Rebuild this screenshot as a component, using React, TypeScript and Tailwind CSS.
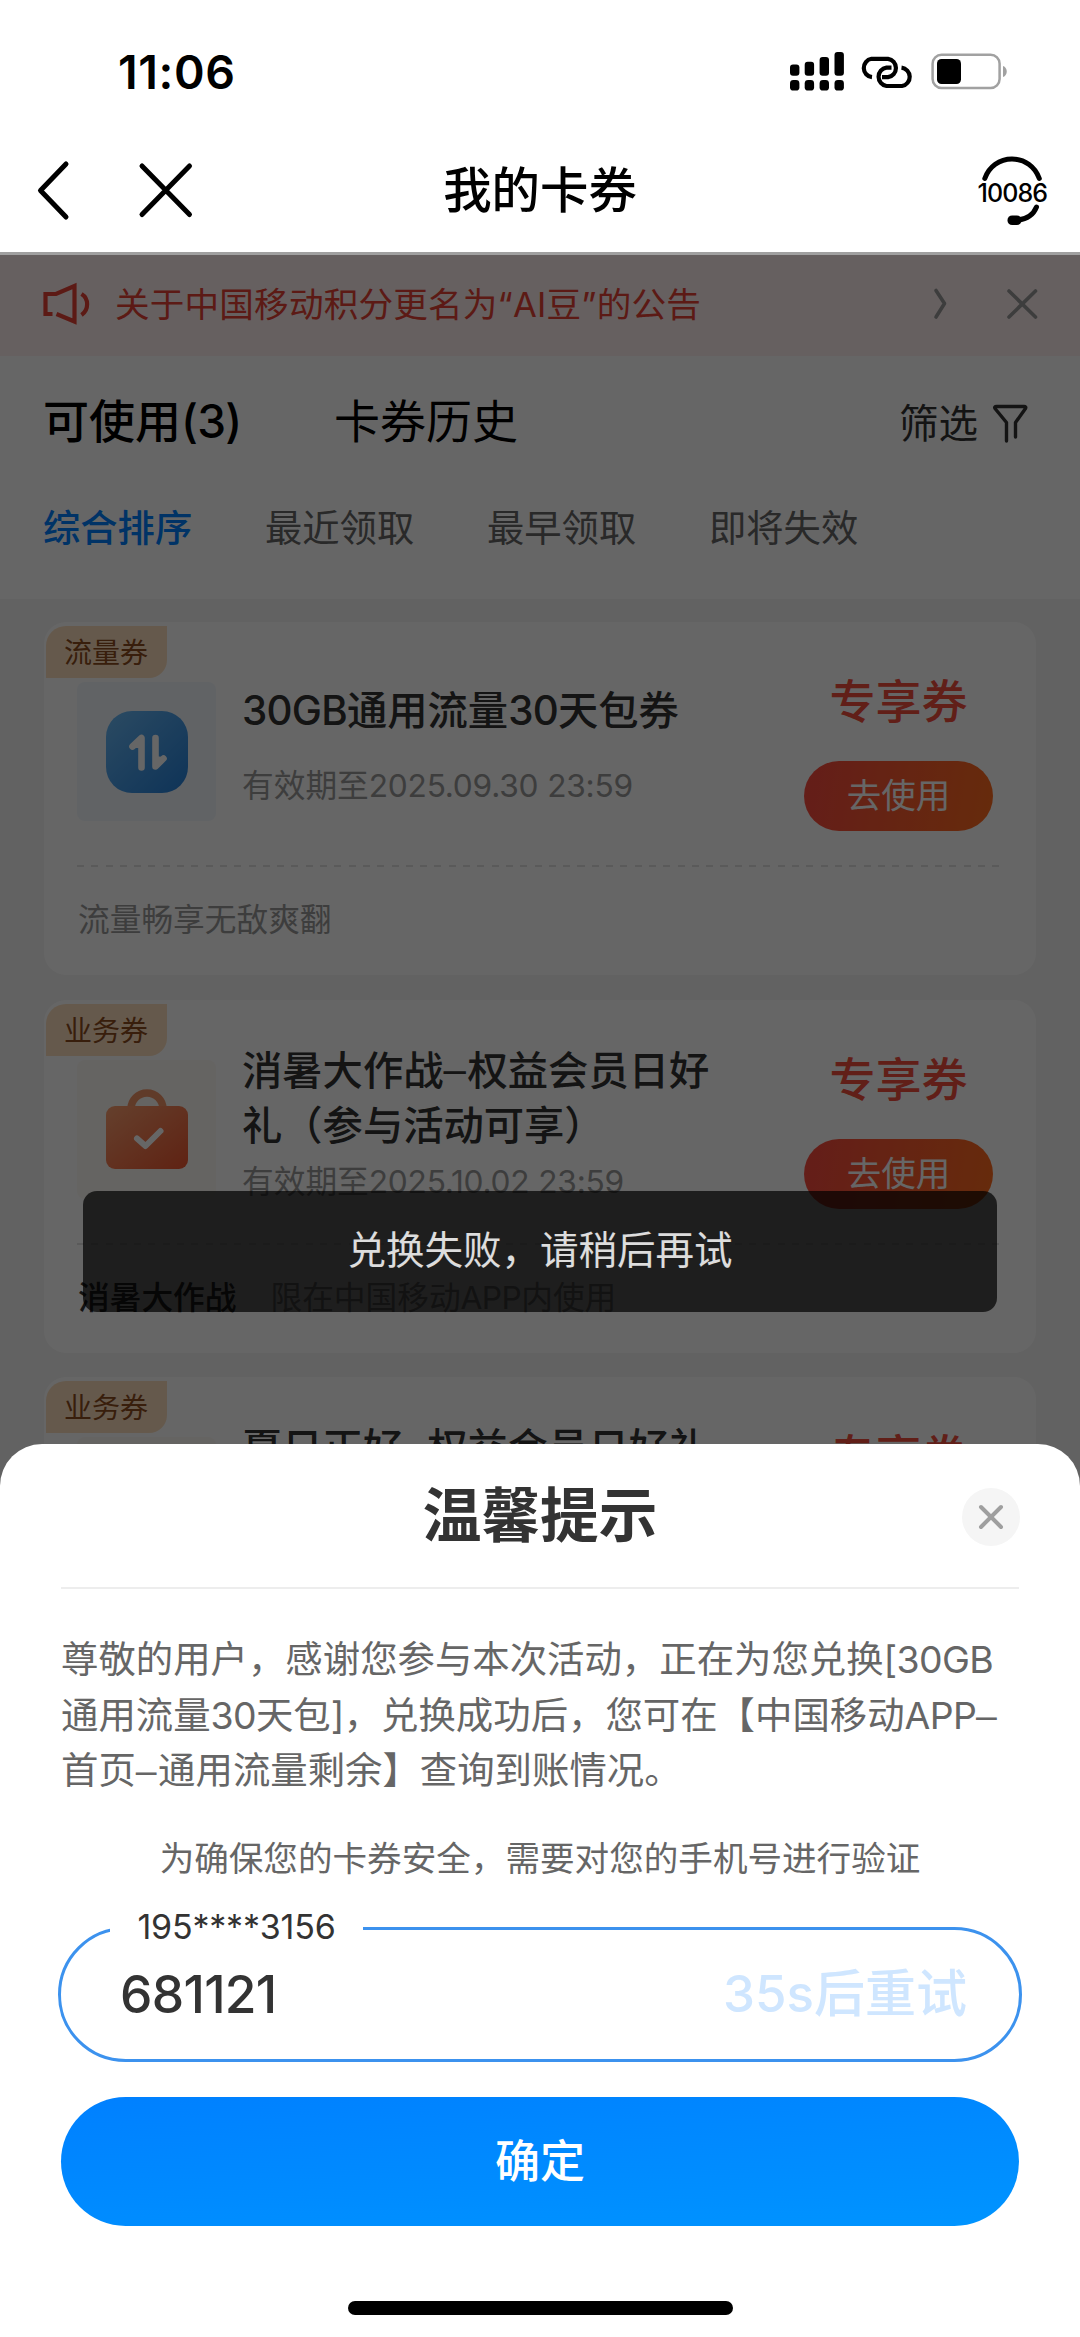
import type { ReactNode } from "react";

const FONT = "font-['Inter','Noto_Sans_CJK_SC',sans-serif]";

/** Mixed-script line: Latin runs are set slightly tighter and dashes slightly wider than the default. */
function Mixed({ text, loose = false }: { text: string; loose?: boolean }) {
  return (
    <>
      {text.split(/([A-Za-z0-9.:[\]()]+|–)/).map((part, i) => {
        if (part === "–") {
          return (
            <span key={i} className="align-[0.04em] font-['Liberation_Sans',sans-serif] leading-none tracking-[0.04em]">
              {part}
            </span>
          );
        }
        if (i % 2 === 1) {
          return (
            <span key={i} className={loose ? "tracking-[-0.008em]" : "tracking-[-0.018em]"}>
              {part}
            </span>
          );
        }
        return part;
      })}
    </>
  );
}

function StatusBar() {
  return (
    <div className="flex h-[126px] shrink-0 items-start justify-between pl-[118px] pr-[72px]">
      <div className="mt-[48px] text-[46.500px] font-semibold leading-[48px] tracking-[0.600px] text-black">11:06</div>
      <div className="mt-[50px] flex">
        <svg width="56" height="44" viewBox="789 50 56 44" className="mr-[14px]">
          <g fill="#000">
            <rect x="790" y="64.5" width="9.4" height="11.3" rx="3" />
            <rect x="804.7" y="61.7" width="9.4" height="14.1" rx="3" />
            <rect x="819.6" y="57" width="9.4" height="18.8" rx="3" />
            <rect x="834.5" y="52" width="9.4" height="23.8" rx="3" />
            <rect x="790" y="80" width="9.4" height="10.6" rx="3.4" />
            <rect x="804.7" y="80" width="9.4" height="10.6" rx="3.4" />
            <rect x="819.6" y="80" width="9.4" height="10.6" rx="3.4" />
            <rect x="834.5" y="80" width="9.4" height="10.6" rx="3.4" />
          </g>
        </svg>
        <svg width="56" height="44" viewBox="859 50 56 44" className="mr-[15px]" fill="none" stroke="#000" strokeWidth="4.2">
          <path d="M872 77.2A9.3 9.3 0 0 1 871.5 58.8H888A9.3 9.3 0 0 1 888 77.2H882" />
          <path d="M901.5 67.6A9.3 9.3 0 0 1 902 86H886.500A9.3 9.3 0 0 1 886.500 67.6H891.500" />
        </svg>
        <svg width="78" height="44" viewBox="930 50 78 44">
          <rect x="932.6" y="54.8" width="67" height="33.2" rx="9" fill="none" stroke="#a1a1a1" strokeWidth="2.5" />
          <rect x="937" y="59" width="24" height="25" rx="4.5" fill="#000" />
          <path d="M1003 66c5 1.500 5 9.500 0 11z" fill="#a1a1a1" />
        </svg>
      </div>
    </div>
  );
}

function NavBar() {
  return (
    <div className="flex h-[129px] shrink-0 items-start border-b-[3px] border-[#a0a0a0]">
      <svg width="200" height="80" viewBox="0 150 200 80" className="mt-[24px]" fill="none" stroke="#000" strokeWidth="5" strokeLinecap="round" strokeLinejoin="round">
        <path d="M66 164 40.500 190.500 66 217" />
        <path d="M142 166 189.500 214.500M189.500 166 142 214.500" />
      </svg>
      <h1 className="mt-[35px] flex-1 text-center text-[48.4px] font-medium leading-[60px] text-black">我的卡券</h1>
      <div className="relative mt-[24px] h-[80px] w-[200px]">
        <svg width="200" height="80" viewBox="880 150 200 80" fill="none" stroke="#000" strokeWidth="5" strokeLinecap="round">
          <path d="M984.800 178.500C989 166.500 999.500 159 1012 159s23 7.500 27.300 19.500" />
          <path d="M1036.500 207c-3 7.500-9 12-18.500 13" />
          <rect x="1007.500" y="215.500" width="14" height="9.500" rx="4.600" fill="#000" stroke="none" />
        </svg>
        <span className="absolute left-[97.500px] top-[29px] text-[25px] font-medium leading-[28px] tracking-[-0.900px] text-black">10086</span>
      </div>
    </div>
  );
}

function Notice() {
  return (
    <div className="flex h-[101px] shrink-0 items-start bg-[#fff0f0] text-[#e54335]">
      <svg width="52" height="48" viewBox="41 280 52 48" className="ml-[41px] mt-[25px]" fill="none" stroke="currentColor" strokeWidth="4.200">
        <path d="M52.500 314H45.500V294H56L74.500 286V321.500L56.500 314" />
        <path d="M81.500 294c7.500 4.500 7.500 16 0 21" />
      </svg>
      <div className="ml-[22px] mt-[24px] w-[781px] whitespace-nowrap text-[34.600px] leading-[50px] tracking-[0.200px]">关于中国移动积分更名为“AI豆”的公告</div>
      <svg width="110" height="40" viewBox="930 284 110 40" className="ml-[34px] mt-[29px]" fill="none" stroke="#999" strokeWidth="3.600" strokeLinecap="round" strokeLinejoin="round">
        <path d="M936 290.500 944.500 303.500 936 317" />
        <path d="M1009 291 1035.500 317M1035.500 291 1009 317" />
      </svg>
    </div>
  );
}

function Filters() {
  return (
    <div className="h-[243px] shrink-0 bg-white">
      <div className="flex items-start pt-[35px]">
        <div className="ml-[43px] w-[291px] text-[46px] font-medium leading-[60px] text-black">
          <Mixed text="可使用(3)" />
        </div>
        <div className="w-[565px] text-[46px] leading-[60px] text-black">卡券历史</div>
        <div className="mt-[3px] text-[39.500px] leading-[60px] text-[#333]">筛选</div>
        <svg width="38" height="42" viewBox="990 402 38 42" className="ml-[13px] mt-[11px]" fill="none" stroke="#333" strokeWidth="3.400" strokeLinecap="round" strokeLinejoin="round">
          <path d="M1005.500 441V422.500L994 408.500Q993 406.500 995.500 406.500H1023Q1025.500 406.500 1024.500 408.500L1014.500 422.500V437" />
        </svg>
      </div>
      <div className="mt-[51px] flex pl-[43px] text-[37.300px] leading-[48px] text-[#666]">
        <div className="w-[222px] font-medium text-[#0080ff]">综合排序</div>
        <div className="w-[222px]">最近领取</div>
        <div className="w-[222px]">最早领取</div>
        <div>即将失效</div>
      </div>
    </div>
  );
}

function DataIcon() {
  return (
    <div className="flex h-[139px] w-[139px] items-center justify-center rounded-[8px] bg-[#f2f8fd]">
      <svg width="84" height="84" viewBox="0 0 84 84">
        <defs>
          <linearGradient id="blue" x1="0" y1="0" x2="1" y2="1">
            <stop offset="0" stopColor="#6cbaf6" />
            <stop offset="1" stopColor="#2480da" />
          </linearGradient>
        </defs>
        <rect x="1" y="1" width="82" height="82" rx="26" fill="url(#blue)" />
        <g fill="none" stroke="#fff" strokeWidth="6.600" strokeLinecap="round" strokeLinejoin="round">
          <path d="M27.500 36.500 36.500 28V57.500" />
          <path d="M50.500 28V56.500L58.500 48.500" />
        </g>
        <path d="M28 38 38 27V38zM49 58V46L59 47z" fill="#fff" />
      </svg>
    </div>
  );
}

function BagIcon() {
  return (
    <div className="flex h-[139px] w-[139px] items-center justify-center rounded-[8px] bg-[#fdf9f6]">
      <svg width="84" height="84" viewBox="0 0 84 84">
        <defs>
          <linearGradient id="bag" x1="0" y1="0" x2="1" y2="1">
            <stop offset="0" stopColor="#fba070" />
            <stop offset="1" stopColor="#ee5630" />
          </linearGradient>
        </defs>
        <path d="M26 22a16 16 0 0 1 32 0" fill="none" stroke="#f09468" strokeWidth="7.500" />
        <rect x="1" y="19" width="82" height="63" rx="9" fill="url(#bag)" />
        <path d="M32 51.500 40.500 59 55.500 44" fill="none" stroke="#fff" strokeWidth="6" strokeLinecap="round" strokeLinejoin="round" />
      </svg>
    </div>
  );
}

interface CouponProps {
  tag: string;
  icon: ReactNode;
  title: string[];
  date: string;
  footer: ReactNode;
}

function Coupon({ tag, icon, title, date, footer }: CouponProps) {
  const single = title.length === 1;
  return (
    <div className="h-[353px] shrink-0 rounded-[22px] bg-white px-[2px] pt-[4px]">
      <div className="h-[52px] w-[121px] rounded-br-[18px] rounded-tl-[20px] bg-[#fddfbe] pl-[18px] text-[28px] leading-[54px] text-[#8c4c20]">{tag}</div>
      <div className="flex h-[187px]">
        <div className="ml-[31px] mt-[4px]">{icon}</div>
        <div className="ml-[26px] w-[538px]">
          <div className={single ? "mt-[5px] text-[40.300px] font-medium leading-[56px] text-[#333]" : "-mt-[13px] text-[40.300px] font-medium leading-[55.500px] text-[#333]"}>
            {title.map((line) => (
              <div key={line} className="whitespace-nowrap">
                <Mixed text={line} />
              </div>
            ))}
          </div>
          <div className={single ? "mt-[24px] text-[31.700px] leading-[46px] text-[#999]" : "mt-[5px] text-[31.700px] leading-[46px] text-[#999]"}>
            <Mixed text={date} loose />
          </div>
        </div>
        <div className="flex w-[237px] flex-col items-center">
          <div className="-mt-[7px] text-[46px] font-medium leading-[60px] text-[#f24e3e]">专享券</div>
          <div className="mt-[30px] h-[70px] w-[189px] rounded-full bg-linear-[100deg] from-[#fb4a40] to-[#ff6c1e] text-center text-[34.500px] leading-[69px] text-white">去使用</div>
        </div>
      </div>
      <div className="ml-[31px] h-[2px] w-[928px] bg-[repeating-linear-gradient(90deg,#e2e2e2_0_7px,transparent_7px_14.300px)]" />
      <div className="ml-[32px] mt-[30px] flex text-[31.700px] leading-[46px] text-[#999]">{footer}</div>
    </div>
  );
}

function Toast() {
  return (
    <div className="absolute left-[83px] top-[1191px] flex h-[121px] w-[914px] items-center justify-center rounded-[14px] bg-black/70 pb-[4px] text-[38.500px] leading-[54px] text-white/85">
      兑换失败，请稍后再试
    </div>
  );
}

function VerifySheet() {
  return (
    <div className="absolute inset-x-0 bottom-0 flex h-[893px] flex-col rounded-t-[42px] bg-white px-[61px]">
      <div className="relative flex h-[143px] shrink-0 justify-center">
        <h2 className="mt-[32px] h-[80px] text-[58.700px] font-bold leading-[80px] text-[#333]">温馨提示</h2>
        <div className="absolute right-[-1px] top-[44px] flex h-[58px] w-[58px] items-center justify-center rounded-full bg-[#f5f5f5]">
          <svg width="28" height="28" viewBox="0 0 28 28" stroke="#9f9f9f" strokeWidth="4" strokeLinecap="round">
            <path d="M4 4 24 24M24 4 4 24" />
          </svg>
        </div>
      </div>
      <div className="h-[2px] shrink-0 bg-[#ededed]" />
      <div className="mt-[43px] whitespace-nowrap text-[37.400px] leading-[55.600px] text-[#666]">
        <div><Mixed text="尊敬的用户，感谢您参与本次活动，正在为您兑换[30GB" /></div>
        <div><Mixed text="通用流量30天包]，兑换成功后，您可在【中国移动APP–" /></div>
        <div><Mixed text="首页–通用流量剩余】查询到账情况。" /></div>
      </div>
      <div className="mt-[34px] text-center text-[34.600px] leading-[50px] text-[#666]">为确保您的卡券安全，需要对您的手机号进行验证</div>
      <div className="relative -mx-[3px] mt-[44px] flex h-[135px] shrink-0 items-center justify-between rounded-full border-[3px] border-[#3c92ee] pl-[59px] pr-[52px]">
        <div className="absolute left-[49px] top-[-26px] w-[253px] bg-white text-center text-[34px] leading-[46px] tracking-[-0.200px] text-[#333]">195****3156</div>
        <div className="text-[51.500px] font-medium leading-[64px] tracking-[-0.700px] text-[#333]">681121</div>
        <div className="text-[51px] font-medium leading-[64px] text-[#cfe6ff]">35s后重试</div>
      </div>
      <div className="mt-[35px] h-[129px] shrink-0 rounded-full bg-linear-[175deg] from-[#0080ff] to-[#0094ff] text-center text-[45px] font-medium leading-[130px] text-white">确定</div>
      <div className="mx-auto mt-[75px] h-[14px] w-[385px] shrink-0 rounded-full bg-black" />
    </div>
  );
}

export default function App() {
  return (
    <div className={`relative flex h-[2337px] w-[1080px] flex-col overflow-hidden bg-white ${FONT}`}>
      <StatusBar />
      <NavBar />
      <div className="relative flex h-[2082px] shrink-0 flex-col overflow-hidden bg-[#f5f5f5]">
        <Notice />
        <Filters />
        <div className="flex flex-col gap-[24.500px] px-[44px] pt-[23px]">
          <Coupon tag="流量券" icon={<DataIcon />} title={["30GB通用流量30天包券"]} date="有效期至2025.09.30 23:59" footer="流量畅享无敌爽翻" />
          <Coupon
            tag="业务券"
            icon={<BagIcon />}
            title={["消暑大作战–权益会员日好", "礼（参与活动可享）"]}
            date="有效期至2025.10.02 23:59"
            footer={
              <>
                <span className="mr-[34px] font-medium text-[#333]">消暑大作战</span>
                <span>
                  <Mixed text="限在中国移动APP内使用" />
                </span>
              </>
            }
          />
          <Coupon tag="业务券" icon={<BagIcon />} title={["夏日正好–权益会员日好礼", "（参与活动可享）"]} date="有效期至2025.10.02 23:59" footer="夏日正好" />
        </div>
        <div className="absolute inset-0 bg-black/60" />
      </div>
      <Toast />
      <VerifySheet />
    </div>
  );
}
